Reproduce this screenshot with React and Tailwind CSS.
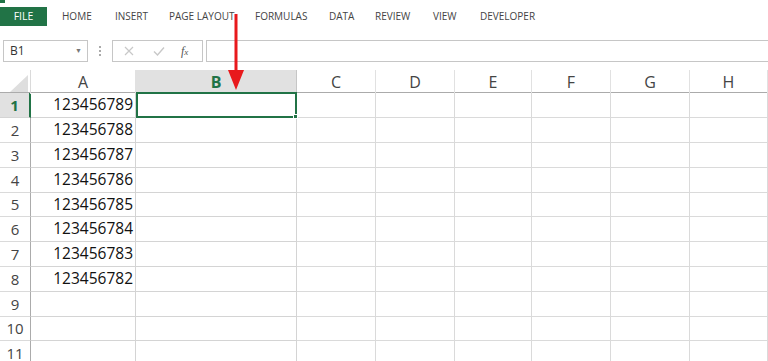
import React from "react";

const tabs = [
  { t: "HOME", w: "w-[53px]" },
  { t: "INSERT", w: "w-[54px]" },
  { t: "PAGE LAYOUT", w: "w-[86px]" },
  { t: "FORMULAS", w: "w-[74px]" },
  { t: "DATA", w: "w-[46px]" },
  { t: "REVIEW", w: "w-[58px]" },
  { t: "VIEW", w: "w-[47px]" },
  { t: "DEVELOPER", w: "w-[60px]" },
];
const cols = ["A", "B", "C", "D", "E", "F", "G", "H"];
const values = ["123456789", "123456788", "123456787", "123456786", "123456785", "123456784", "123456783", "123456782"];
const rowHeights = [25, 25, 25, 25, 24, 25, 25, 25, 25, 24, 25];

const gridCols = "grid grid-cols-[31px_105px_161px_79px_79px_77px_79px_79px_78px]";

function Ribbon() {
  return (
    <div className="relative h-[33px]">
      <div className="absolute left-0 top-0 h-[3px] w-[5px] bg-[#217346]" />
      <div className="flex items-start pt-[7px]">
        <div className="flex h-[19px] w-[47px] items-center justify-center bg-[#217346] text-[10.5px] text-white">
          FILE
        </div>
        <div className="ml-[15px] flex h-[19px] items-center text-[10px] text-[#444]">
          {tabs.map((t) => (
            <span key={t.t} className={`${t.w} whitespace-nowrap`}>
              {t.t}
            </span>
          ))}
        </div>
      </div>
    </div>
  );
}

function FormulaBar() {
  return (
    <div className="mt-[7px] flex h-[22px] items-stretch">
      <div className="ml-[3px] flex w-[85px] items-center justify-between border border-[#c6c6c6] pl-[6px] pr-[5px] text-[12px] text-[#333]">
        <span>B1</span>
        <span className="text-[7px] text-[#777]">▼</span>
      </div>
      <div className="flex w-[24px] flex-col items-center justify-center gap-[2px]">
        <span className="h-[2px] w-[2px] bg-[#aaa]" />
        <span className="h-[2px] w-[2px] bg-[#aaa]" />
        <span className="h-[2px] w-[2px] bg-[#aaa]" />
      </div>
      <div className="flex w-[91px] items-center border border-[#c6c6c6]">
        <svg className="ml-[11px]" width="10" height="10" viewBox="0 0 10 10">
          <path d="M1 1L9 9M9 1L1 9" stroke="#c8c8c8" strokeWidth="1.2" fill="none" />
        </svg>
        <svg className="ml-[19px]" width="12" height="10" viewBox="0 0 12 10">
          <path d="M1 5.5L4.5 9L11 1.5" stroke="#c8c8c8" strokeWidth="1.4" fill="none" />
        </svg>
        <span className="ml-[16px] font-['Liberation_Serif',serif] text-[12px] italic text-[#555]">
          f<span className="text-[9px]">x</span>
        </span>
      </div>
      <div className="ml-[3px] flex-1 border border-r-0 border-[#c6c6c6]" />
    </div>
  );
}

function HeaderRow() {
  return (
    <div className={`${gridCols} h-[23px] border-b border-[#ababab]`}>
      <div className="relative border-r border-[#dadada]">
        <svg className="absolute bottom-[2px] right-[2px]" width="18" height="17" viewBox="0 0 18 17">
          <path d="M18 0L18 17L0 17Z" fill="#dedede" />
        </svg>
      </div>
      {cols.map((c) =>
        c === "B" ? (
          <div key={c} className="flex items-center justify-center border-r border-[#c6c6c6] bg-[#e1e1e1] text-[16px] font-bold text-[#217346]">
            {c}
          </div>
        ) : (
          <div key={c} className="flex items-center justify-center border-r border-[#e1e1e1] text-[16px] text-[#444]">
            {c}
          </div>
        )
      )}
    </div>
  );
}

function Row({ n, h }) {
  const sel = n === 1;
  const val = values[n - 1];
  return (
    <div className={gridCols} style={{ height: h }}>
      <div
        className={
          sel
            ? "flex items-center justify-center border-b border-r-2 border-b-[#d4d4d4] border-r-[#217346] bg-[#e1e1e1] text-[15px] font-bold text-[#217346]"
            : "flex items-center justify-center border-b border-r border-b-[#dadada] border-r-[#ababab] text-[15px] text-[#444]"
        }
      >
        {n}
      </div>
      <div className="flex items-center justify-end border-b border-r border-[#d4d4d4] pr-[2px] text-[15.5px] text-[#111]">
        {val}
      </div>
      {sel ? (
        <div className="relative -mt-px border-2 border-[#217346]">
          <span className="absolute -bottom-[3px] -right-[3px] h-[5px] w-[5px] border border-white bg-[#217346]" />
        </div>
      ) : (
        <div className="border-b border-r border-[#d4d4d4]" />
      )}
      {cols.slice(2).map((c) => (
        <div key={c} className="border-b border-r border-[#dadada]" />
      ))}
    </div>
  );
}

function Arrow() {
  return (
    <svg className="pointer-events-none absolute left-[226px] top-[14px]" width="20" height="78" viewBox="0 0 20 78">
      <rect x="8.5" y="0" width="3" height="60" fill="#e8191c" />
      <path d="M2 56L18 56L10 76Z" fill="#e8191c" />
    </svg>
  );
}

export default function App() {
  return (
    <div className="relative h-[361px] w-[768px] overflow-hidden bg-white font-['Open_Sans',sans-serif]">
      <Ribbon />
      <FormulaBar />
      <div className="mt-[8px]">
        <HeaderRow />
        {rowHeights.map((h, i) => (
          <Row key={i} n={i + 1} h={h} />
        ))}
      </div>
      <Arrow />
    </div>
  );
}
